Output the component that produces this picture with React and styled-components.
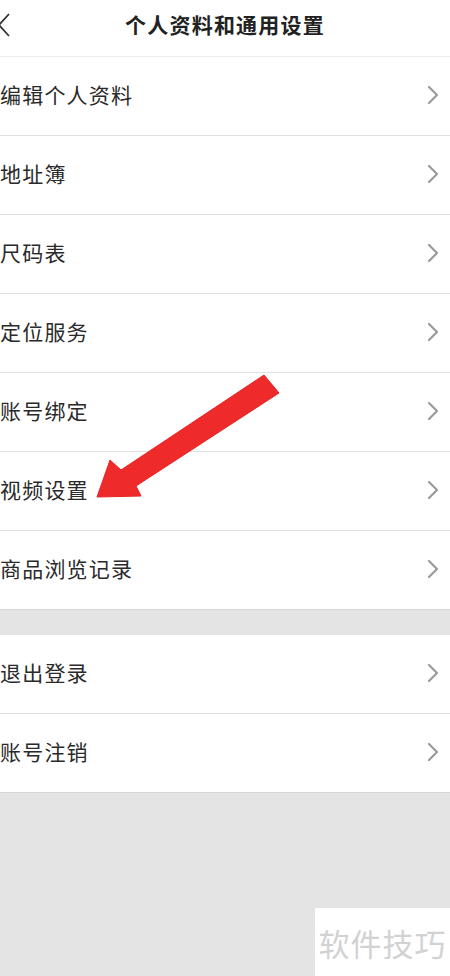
import React from 'react';
import styled, { createGlobalStyle } from 'styled-components';

const GlobalStyle = createGlobalStyle`
  html, body {
    margin: 0;
    padding: 0;
    background: #e4e4e4;
    font-family: "Noto Sans CJK SC", "Noto Sans", sans-serif;
  }
`;

const Page = styled.div`
  position: relative;
  width: 450px;
  height: 976px;
  overflow: hidden;
  background: #e4e4e4;
  display: flex;
  flex-direction: column;
`;

const Header = styled.header`
  height: 56px;
  background: #fff;
  border-bottom: 1px solid #ececec;
  display: flex;
  align-items: center;
  justify-content: center;
  position: relative;
  flex-shrink: 0;
`;

const BackButton = styled.div`
  position: absolute;
  left: -4px;
  top: 12px;
  width: 16px;
  height: 26px;
`;

const Title = styled.h1`
  margin: 0 0 8px;
  font-size: 21px;
  font-weight: 700;
  color: #222;
  letter-spacing: 1.2px;
`;

const Section = styled.section`
  background: #fff;
  border-bottom: 1px solid #d6d6d6;
  margin-bottom: ${(p) => p.$gap || 0}px;
`;

const Row = styled.div`
  height: 78px;
  display: flex;
  align-items: center;
  justify-content: space-between;
  padding: 0 10px 0 0;
  border-top: ${(p) => (p.$first ? 'none' : '1px solid #e0e0e0')};
  box-sizing: content-box;
`;

const Label = styled.span`
  font-size: 21px;
  color: #2a2a2a;
  letter-spacing: 1.2px;
  margin-top: -4px;
`;

const Chevron = styled.svg`
  width: 14px;
  height: 22px;
  margin-top: -2px;
`;

const Arrow = styled.svg`
  position: absolute;
  left: 0;
  top: 0;
  pointer-events: none;
`;

const Watermark = styled.div`
  position: absolute;
  right: 0;
  bottom: 0;
  width: 135px;
  height: 68px;
  background: #fff;
  display: flex;
  align-items: center;
  justify-content: center;
  font-size: 31px;
  color: #d2d2d2;
  letter-spacing: 1px;
`;

const RightIcon = () => (
  <Chevron viewBox="0 0 14 22">
    <path d="M3 3 L11 11 L3 19" fill="none" stroke="#9a9a9a" strokeWidth="2.2" strokeLinecap="round" strokeLinejoin="round" />
  </Chevron>
);

const main = ['编辑个人资料', '地址簿', '尺码表', '定位服务', '账号绑定', '视频设置', '商品浏览记录'];
const account = ['退出登录', '账号注销'];

export default function App() {
  return (
    <>
      <GlobalStyle />
      <Page>
        <Header>
          <BackButton>
            <svg width="16" height="26" viewBox="0 0 16 26">
              <path d="M13 2 L3 13 L13 24" fill="none" stroke="#333" strokeWidth="1.8" />
            </svg>
          </BackButton>
          <Title>个人资料和通用设置</Title>
        </Header>
        <Section $gap={25}>
          {main.map((t, i) => (
            <Row key={t} $first={i === 0}>
              <Label>{t}</Label>
              <RightIcon />
            </Row>
          ))}
        </Section>
        <Section>
          {account.map((t, i) => (
            <Row key={t} $first={i === 0}>
              <Label>{t}</Label>
              <RightIcon />
            </Row>
          ))}
        </Section>
        <Arrow width="450" height="976" viewBox="0 0 450 976">
          <polygon
            points="264,375 279,393 136,486 141,496 97,497 110,460 121,470"
            fill="#ee2a2a"
            stroke="#e82424"
            strokeWidth="1"
            strokeLinejoin="round"
          />
        </Arrow>
        <Watermark>软件技巧</Watermark>
      </Page>
    </>
  );
}
